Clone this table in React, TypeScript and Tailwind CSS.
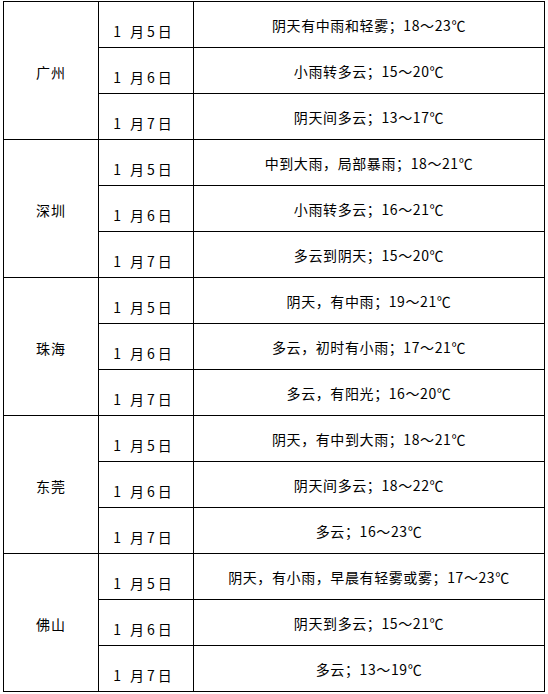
const groups = [
  {
    city: '广州',
    rows: [
      ['1 月5日', '阴天有中雨和轻雾；18～23℃'],
      ['1 月6日', '小雨转多云；15～20℃'],
      ['1 月7日', '阴天间多云；13～17℃'],
    ],
  },
  {
    city: '深圳',
    rows: [
      ['1 月5日', '中到大雨，局部暴雨；18～21℃'],
      ['1 月6日', '小雨转多云；16～21℃'],
      ['1 月7日', '多云到阴天；15～20℃'],
    ],
  },
  {
    city: '珠海',
    rows: [
      ['1 月5日', '阴天，有中雨；19～21℃'],
      ['1 月6日', '多云，初时有小雨；17～21℃'],
      ['1 月7日', '多云，有阳光；16～20℃'],
    ],
  },
  {
    city: '东莞',
    rows: [
      ['1 月5日', '阴天，有中到大雨；18～21℃'],
      ['1 月6日', '阴天间多云；18～22℃'],
      ['1 月7日', '多云；16～23℃'],
    ],
  },
  {
    city: '佛山',
    rows: [
      ['1 月5日', '阴天，有小雨，早晨有轻雾或雾；17～23℃'],
      ['1 月6日', '阴天到多云；15～21℃'],
      ['1 月7日', '多云；13～19℃'],
    ],
  },
];

export default function App() {
  return (
    <div
      className="min-h-screen bg-white text-black text-[14px] leading-none"
      style={{ fontFamily: '"Noto Sans CJK SC", "Noto Sans", sans-serif' }}
    >
      <div className="ml-[3px] pt-[1px]">
        <div className="grid w-[542px] grid-cols-[95px_95px_351px] border-t border-l border-black">
          {groups.map((g) => (
            <div key={g.city} className="contents">
              <div className="row-span-3 flex items-center justify-center border-r border-b border-black pt-[2px] tracking-[1px]">
                {g.city}
              </div>
              {g.rows.map(([date, text]) => (
                <div key={date} className="contents">
                  <div className="col-start-2 flex h-[46px] items-center justify-center border-r border-b border-black pt-3 pr-1 tracking-[3px]">
                    {date}
                  </div>
                  <div className="flex h-[46px] items-center justify-center border-r border-b border-black tracking-[0.6px]">
                    {text}
                  </div>
                </div>
              ))}
            </div>
          ))}
        </div>
      </div>
    </div>
  );
}
